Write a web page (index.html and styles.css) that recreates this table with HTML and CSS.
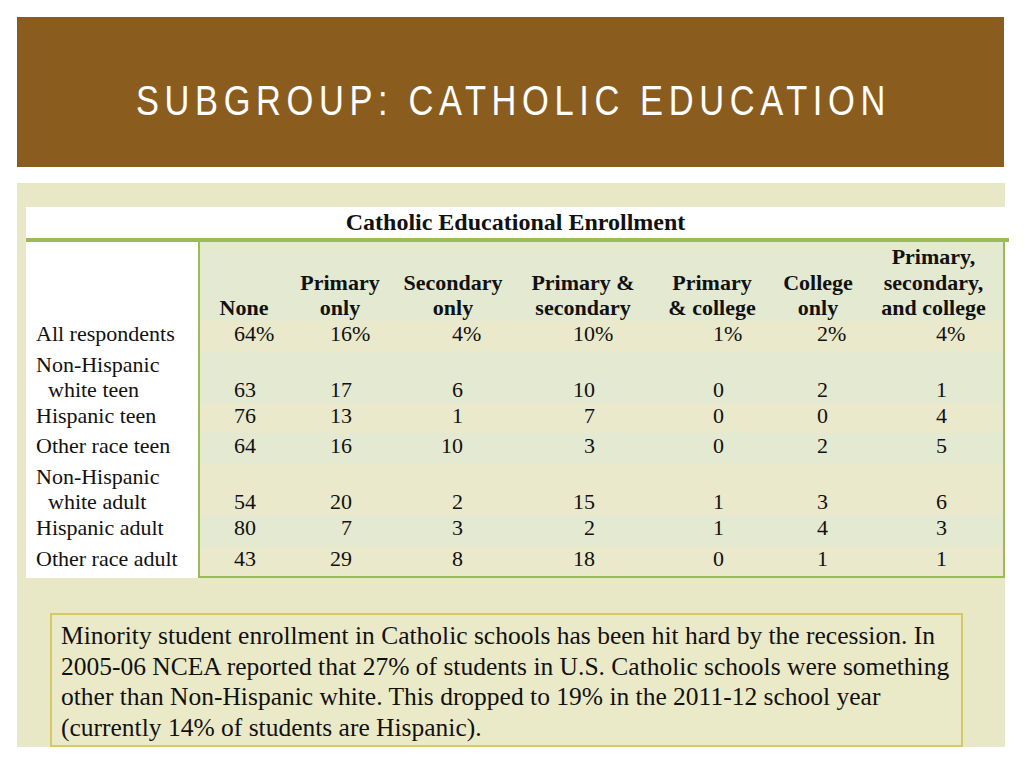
FILE: index.html
```html
<!DOCTYPE html>
<html>
<head>
<meta charset="utf-8">
<title>Subgroup: Catholic Education</title>
<link rel="stylesheet" href="styles.css">
</head>
<body>
<div class="slide">
  <header class="banner">
    <h1 class="title">SUBGROUP: CATHOLIC EDUCATION</h1>
  </header>
  <section class="panel">
    <div class="tbl">
      <div class="caption">Catholic Educational Enrollment</div>
      <div class="tbody">
        <div class="labels">
          <div class="row hdr"></div>
          <div class="row one">All respondents</div>
          <div class="row two">Non-Hispanic<br><span class="ind">white teen</span></div>
          <div class="row one tight">Hispanic teen</div>
          <div class="row one">Other race teen</div>
          <div class="row two">Non-Hispanic<br><span class="ind">white adult</span></div>
          <div class="row one">Hispanic adult</div>
          <div class="row one last">Other race adult</div>
        </div>
        <div class="frame">
          <div class="row hdr g">
            <div class="c c1">None</div>
            <div class="c c2">Primary<br>only</div>
            <div class="c c3">Secondary<br>only</div>
            <div class="c c4">Primary &amp;<br>secondary</div>
            <div class="c c5">Primary<br>&amp; college</div>
            <div class="c c6">College<br>only</div>
            <div class="c c7">Primary,<br>secondary,<br>and college</div>
          </div>
          <div class="row one y">
            <div class="c c1">64<span class="pct">%</span></div>
            <div class="c c2">16<span class="pct">%</span></div>
            <div class="c c3">4<span class="pct">%</span></div>
            <div class="c c4">10<span class="pct">%</span></div>
            <div class="c c5">1<span class="pct">%</span></div>
            <div class="c c6">2<span class="pct">%</span></div>
            <div class="c c7">4<span class="pct">%</span></div>
          </div>
          <div class="row two g">
            <div class="c c1">63</div><div class="c c2">17</div><div class="c c3">6</div><div class="c c4">10</div><div class="c c5">0</div><div class="c c6">2</div><div class="c c7">1</div>
          </div>
          <div class="row one tight y">
            <div class="c c1">76</div><div class="c c2">13</div><div class="c c3">1</div><div class="c c4">7</div><div class="c c5">0</div><div class="c c6">0</div><div class="c c7">4</div>
          </div>
          <div class="row one g">
            <div class="c c1">64</div><div class="c c2">16</div><div class="c c3">10</div><div class="c c4">3</div><div class="c c5">0</div><div class="c c6">2</div><div class="c c7">5</div>
          </div>
          <div class="row two y">
            <div class="c c1">54</div><div class="c c2">20</div><div class="c c3">2</div><div class="c c4">15</div><div class="c c5">1</div><div class="c c6">3</div><div class="c c7">6</div>
          </div>
          <div class="row one g">
            <div class="c c1">80</div><div class="c c2">7</div><div class="c c3">3</div><div class="c c4">2</div><div class="c c5">1</div><div class="c c6">4</div><div class="c c7">3</div>
          </div>
          <div class="row one last y">
            <div class="c c1">43</div><div class="c c2">29</div><div class="c c3">8</div><div class="c c4">18</div><div class="c c5">0</div><div class="c c6">1</div><div class="c c7">1</div>
          </div>
        </div>
      </div>
    </div>
    <div class="note">
      <p class="note-text">Minority student enrollment in Catholic schools has been hit hard by the recession. In<br>2005-06 NCEA reported that 27% of students in U.S. Catholic schools were something<br>other than Non-Hispanic white. This dropped to 19% in the 2011-12 school year<br>(currently 14% of students are Hispanic).</p>
    </div>
  </section>
</div>
</body>
</html>
```

FILE: styles.css
```css
html, body {
  margin: 0;
  padding: 0;
  background: #ffffff;
}

.slide {
  width: 1024px;
  height: 768px;
  padding: 17px 0 0 17px;
  box-sizing: border-box;
  overflow: hidden;
}

.banner {
  width: 987px;
  height: 150px;
  background: #8a5d1f;
  display: flex;
  align-items: center;
  box-sizing: border-box;
  padding: 18px 0 0 119px;
}

.title {
  margin: 0;
  color: #ffffff;
  font-family: "Liberation Sans", Arial, sans-serif;
  font-weight: normal;
  font-size: 42px;
  letter-spacing: 6.85px;
  line-height: 1;
  white-space: nowrap;
  transform: scaleX(0.82);
  transform-origin: left center;
}

.panel {
  margin-top: 16px;
  width: 988px;
  height: 564px;
  background: #e8e8c6;
  box-sizing: border-box;
  padding: 24px 0 0 9px;
  font-family: "Liberation Serif", "Times New Roman", serif;
  color: #111111;
}

.tbl {
  width: 979px;
  font-size: 22px;
  line-height: 25.5px;
}

.caption {
  height: 31px;
  background: #ffffff;
  border-bottom: 4px solid #9bbb59;
  margin-right: -4px;
  padding-right: 4px;
  box-sizing: content-box;
  text-align: center;
  font-weight: bold;
  font-size: 24px;
  line-height: 31px;
}

.tbody {
  display: flex;
}

.labels {
  width: 172px;
  background: #ffffff;
  box-sizing: border-box;
  padding-left: 10px;
}

.ind {
  padding-left: 12px;
}

.frame {
  flex: 1;
  border: 2px solid #9bbb59;
  border-top: none;
  background: #e4e9d0;
}

.row {
  box-sizing: border-box;
}

.hdr {
  height: 78.5px;
}

.one {
  height: 31px;
}

.one.tight {
  height: 30px;
}

.two {
  height: 51px;
}

.one.last {
  height: 30.5px;
}

.frame .row {
  display: grid;
  grid-template-columns: 88px 104px 122px 138px 120px 92px 1fr;
}

.frame .hdr {
  padding-top: 2px;
}

.frame .hdr .c {
  display: flex;
  flex-direction: column;
  justify-content: flex-end;
  text-align: center;
  font-weight: bold;
  padding-right: 0;
}

.g {
  background: #e4e9d2;
}

.y {
  background: #eae9cb;
}

.c {
  text-align: right;
  white-space: nowrap;
}

.row.two .c {
  padding-top: 25.5px;
}

.c1 { padding-right: 32px; }
.c2 { padding-right: 40px; }
.c3 { padding-right: 51px; }
.c4 { padding-right: 57px; }
.c5 { padding-right: 48px; }
.c6 { padding-right: 36px; }
.c7 { padding-right: 56px; }

.pct {
  margin-right: -0.833em;
}

.note {
  margin: 35px 0 0 24px;
  width: 913px;
  height: 134px;
  box-sizing: border-box;
  border: 2px solid #d6c865;
  background: #ebeac8;
  padding: 6px 0 0 9px;
  overflow: hidden;
}

.note-text {
  margin: 0;
  font-size: 25.5px;
  line-height: 30.7px;
  white-space: nowrap;
}
```
